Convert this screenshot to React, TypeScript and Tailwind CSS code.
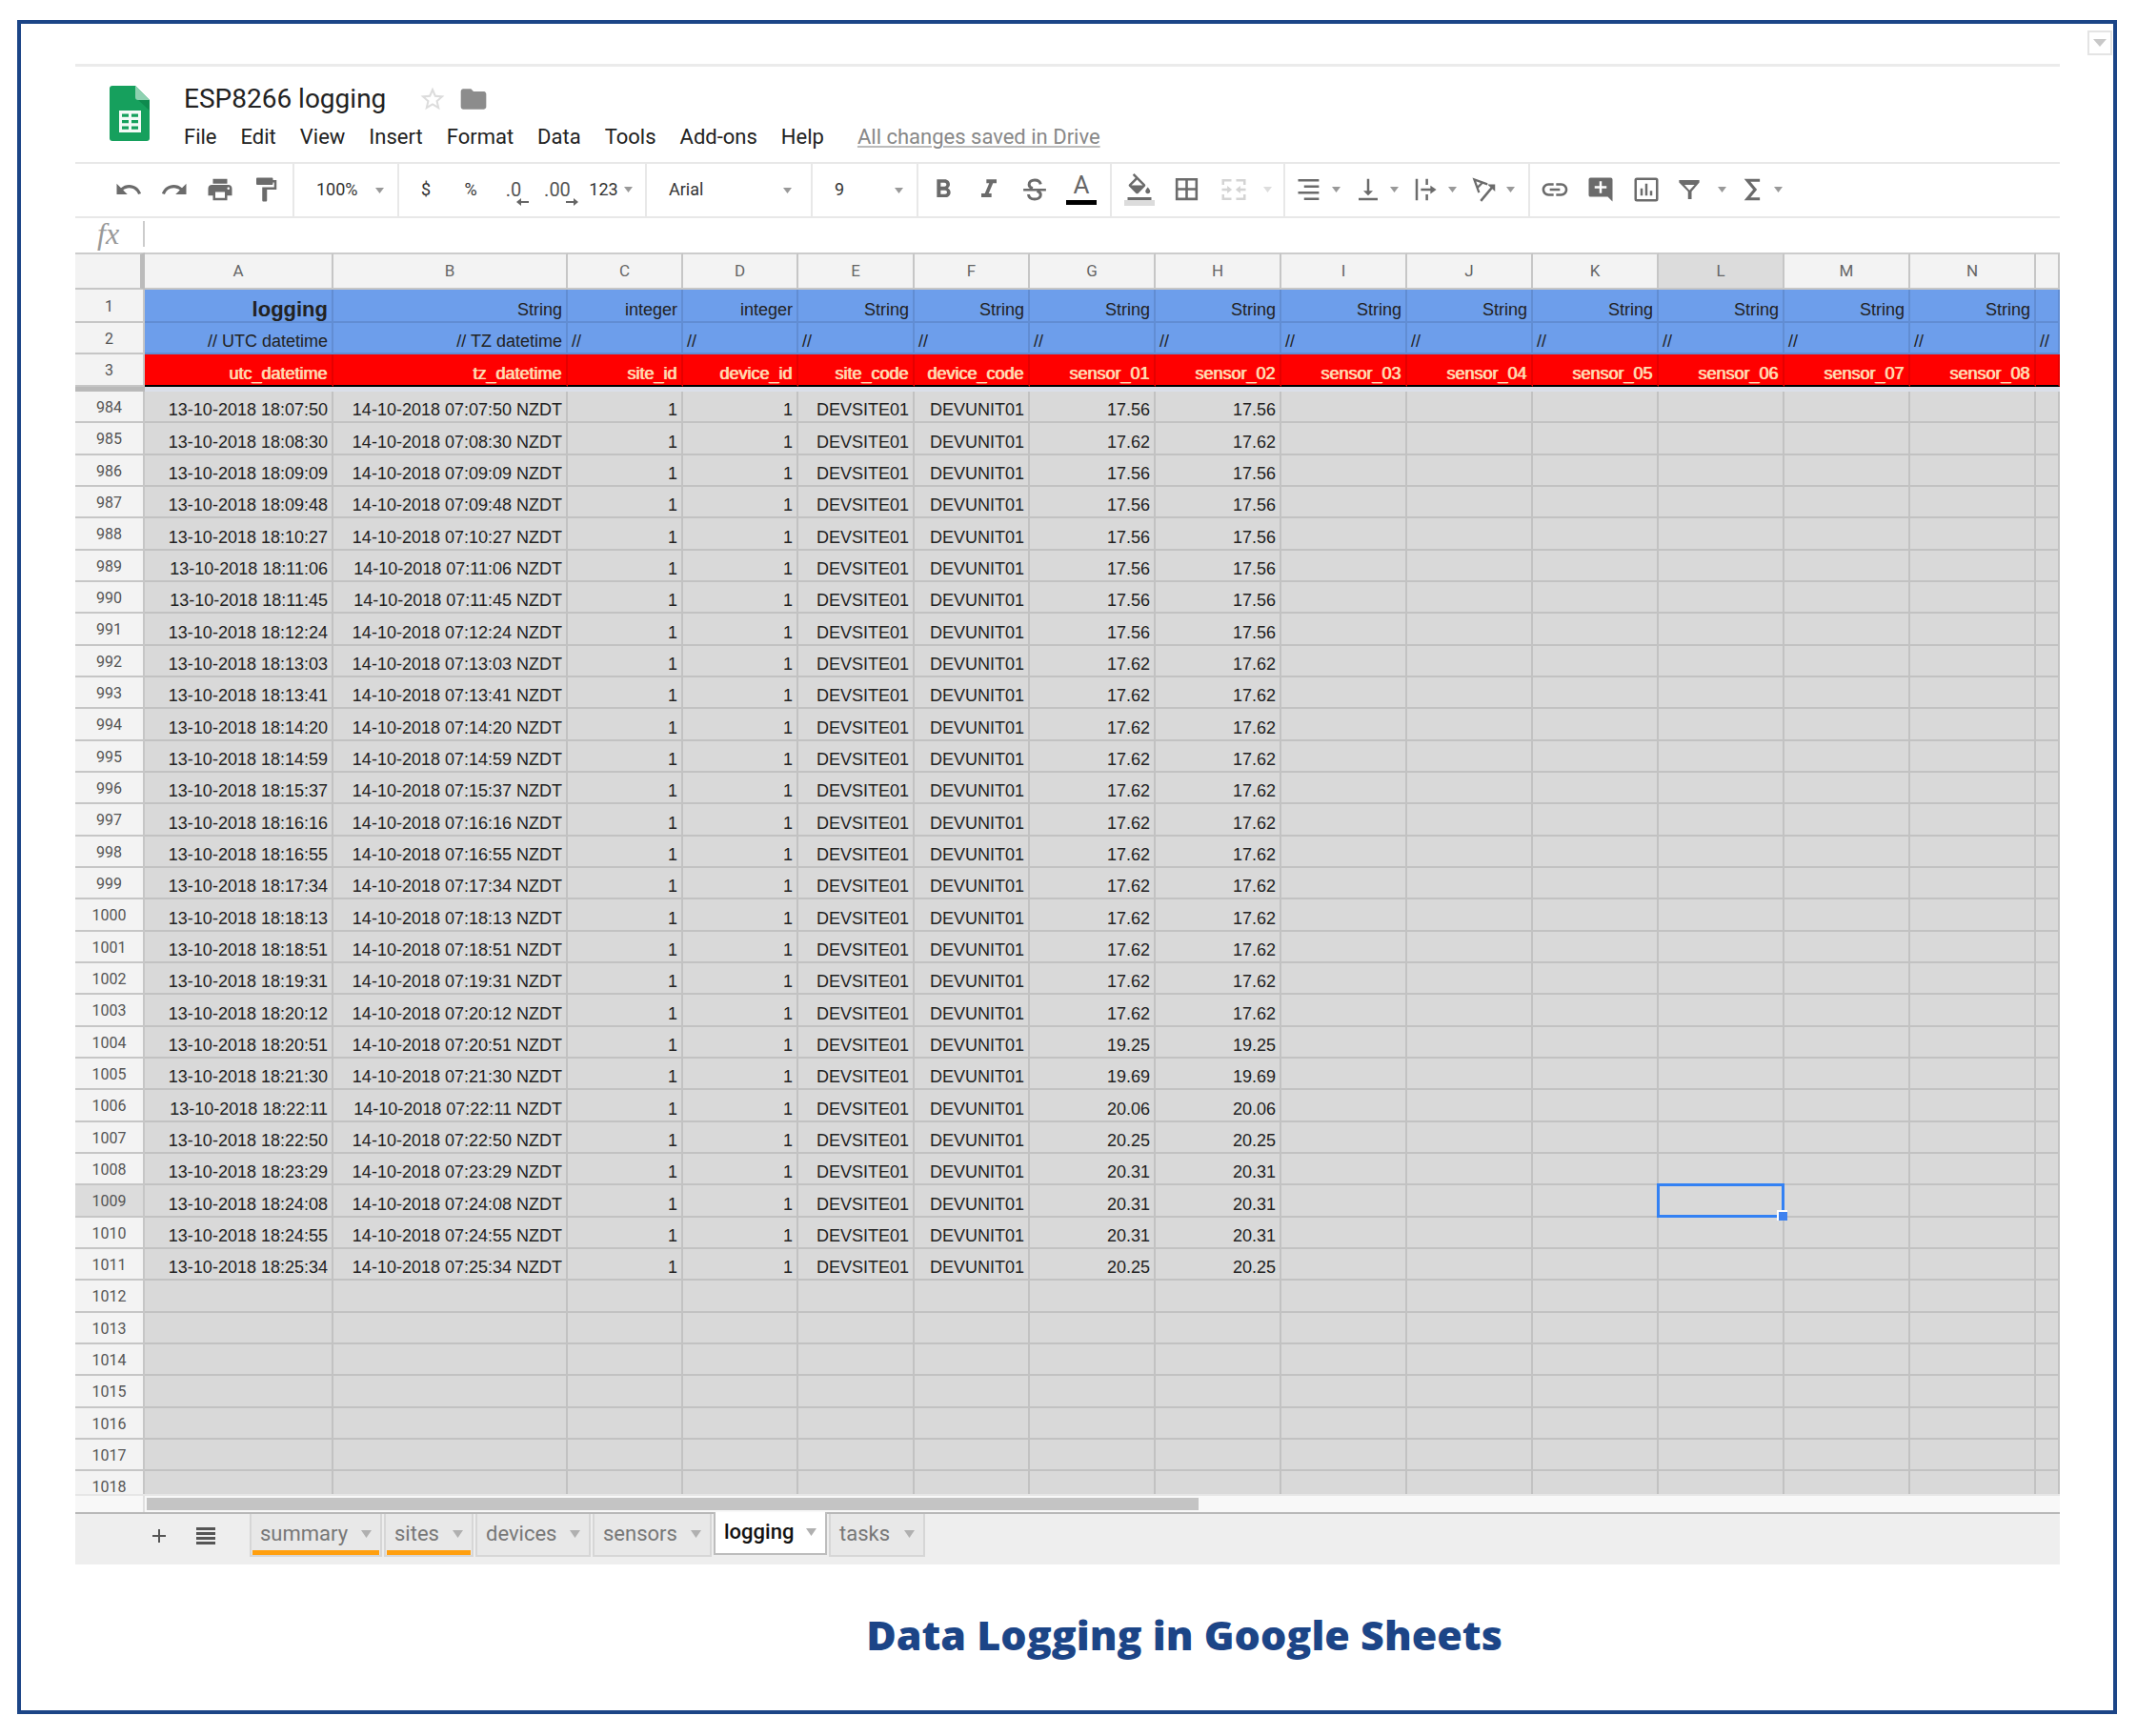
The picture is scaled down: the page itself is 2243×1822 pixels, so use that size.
import React from "react";
import {
  MdUndo, MdRedo, MdPrint, MdFormatPaint, MdFormatBold, MdFormatItalic,
  MdFormatColorFill, MdBorderAll, MdVerticalAlignBottom,
  MdInsertLink, MdFolder, MdStarBorder, MdAdd,
} from "react-icons/md";

const ICON = 30;
const GREY = "#6b6b6b";

function Caret({ className = "text-[#999]" }: { className?: string }) {
  return (
    <svg width="9" height="6" viewBox="0 0 9 6" className={"shrink-0 " + className} aria-hidden="true">
      <path d="M0 0h9L4.5 6z" fill="currentColor" />
    </svg>
  );
}

function SheetsLogo() {
  return (
    <svg width="42" height="58" viewBox="0 0 42 58" aria-label="Sheets">
      <path d="M3 0h24l15 15v40a3 3 0 0 1-3 3H3a3 3 0 0 1-3-3V3a3 3 0 0 1 3-3z" fill="#16a05d" />
      <path d="M29 14l13 12V15z" fill="#0e8a4e" />
      <path d="M27 0l15 15H30a3 3 0 0 1-3-3z" fill="#8ed1b1" />
      <path
        fill="#f4faf7"
        fillRule="evenodd"
        d="M10 26h23v23H10zM13 29.500v3.200h7v-3.200zM23 29.500v3.200h7v-3.200zM13 36v3.200h7V36zM23 36v3.200h7V36zM13 42.500v3.200h7v-3.200zM23 42.500v3.200h7v-3.200z"
      />
    </svg>
  );
}

function Stroke({ children, color = GREY }: { children: React.ReactNode; color?: string }) {
  return (
    <svg width={ICON} height={ICON} viewBox="0 0 24 24" fill="none" stroke={color} strokeWidth="2" className="shrink-0">
      {children}
    </svg>
  );
}

const MergeIcon = () => (
  <Stroke color="#d4d4d4">
    <path d="M3 8V4.200h7M14 4.200h7V8M3 16v3.800h7M14 19.800h7V16" />
    <path d="M2 12h5M22 12h-5" />
    <path d="M6.500 8.800L10.500 12l-4 3.200zM17.500 8.800L13.500 12l4 3.200z" fill="#d4d4d4" stroke="none" />
  </Stroke>
);

const AlignRightIcon = () => (
  <Stroke>
    <path d="M2 4.200h17.500M7 9.400h12.500M2 14.600h17.500M7 19.800h12.500" />
  </Stroke>
);

const OverflowIcon = () => (
  <Stroke>
    <path d="M4 3v18M12.500 3v5M12.500 16v5M7.500 12H17" />
    <path d="M15.500 8.500L20.500 12l-5 3.500z" fill={GREY} stroke="none" />
  </Stroke>
);

const RotateIcon = () => (
  <Stroke>
    <path d="M7.500 14.500L3.500 3.500l11 4M6 10.500l4.500-4.500" strokeWidth="1.800" />
    <path d="M9 21.500L19 9.500" />
    <path d="M14.500 7.500h6.500v6z" fill={GREY} stroke="none" />
  </Stroke>
);

const StrikeIcon = () => (
  <Stroke>
    <path d="M17 7.500C16.500 5 14.500 4 12 4 9.300 4 7.300 5.400 7.300 7.700c0 1.500 1 2.600 3 3.300M14 13c2 .7 3 1.700 3 3.300 0 2.400-2.200 3.700-5 3.700-2.900 0-5-1.300-5.200-4" strokeWidth="2.400" />
    <path d="M2.500 12.200h19" />
  </Stroke>
);

const SigmaIcon = () => (
  <Stroke>
    <path d="M18.500 4.200H8L14.500 12 8 19.800h10.500" strokeWidth="2.500" />
  </Stroke>
);

const CommentIcon = () => (
  <svg width={ICON} height={ICON} viewBox="0 0 24 24" fill={GREY} className="shrink-0">
    <path d="M3.500 2h17A1.500 1.500 0 0 1 22 3.500V22l-4-4H3.500A1.500 1.500 0 0 1 2 16.500v-13A1.500 1.500 0 0 1 3.500 2zM11 5v4H7v2h4v4h2v-4h4V9h-4V5z" fillRule="evenodd" />
  </svg>
);

const ChartIcon = () => (
  <Stroke>
    <rect x="3" y="3" width="18" height="18" rx="1" />
    <path d="M8 11v6M12 7v10M16 13v4" />
  </Stroke>
);

const FilterIcon = () => (
  <svg width={ICON} height={ICON} viewBox="0 0 24 24" fill={GREY} className="shrink-0">
    <path fillRule="evenodd" d="M3.500 4h17v2L14 13.500V20h-3v-6.500L3.500 6zM8 8l4.200 4.600L16.500 8z" />
  </svg>
);

function DecimalIcon({ text, dir }: { text: string; dir: "left" | "right" }) {
  return (
    <span className="relative text-[20px] leading-none text-[#555]">
      {text}
      <svg width="13" height="8" viewBox="0 0 13 8" className="absolute -right-2 top-[19px]">
        <path fill="#666" d={dir === "left" ? "M0 4l5-4v3h8v2H5v3z" : "M13 4L8 0v3H0v2h8v3z"} />
      </svg>
    </span>
  );
}

function Tool({ label, caret, className = "w-12 gap-2", children }: {
  label: string; caret?: boolean; className?: string; children: React.ReactNode;
}) {
  return (
    <button type="button" aria-label={label} className={"flex h-full shrink-0 items-center justify-center pb-[2px] text-[18px] text-[#333] " + className}>
      {children}
      {caret && <Caret />}
    </button>
  );
}

function Picker({ label, options, className, caretClass }: {
  label: string; options: string[]; className: string; caretClass: string;
}) {
  return (
    <label className={"relative flex shrink-0 items-center border-r-2 border-[#e8e8e8] " + className}>
      <select aria-label={label} className="h-full w-full appearance-none bg-transparent pb-[2px] pl-[23px] text-[18px] text-[#333] outline-none">
        {options.map((o) => <option key={o}>{o}</option>)}
      </select>
      <Caret className={"pointer-events-none absolute text-[#999] " + caretClass} />
    </label>
  );
}

function Group({ className = "", children }: { className?: string; children: React.ReactNode }) {
  return <div className={"flex shrink-0 items-center border-r-2 border-[#e8e8e8] " + className}>{children}</div>;
}

function Toolbar() {
  return (
    <div className="flex h-[59px] border-y-2 border-[#e8e8e8]">
      <Group className="w-[230px] pl-8">
        <Tool label="Undo"><MdUndo size={ICON} color={GREY} /></Tool>
        <Tool label="Redo"><MdRedo size={ICON} color={GREY} /></Tool>
        <Tool label="Print"><MdPrint size={ICON} color={GREY} /></Tool>
        <Tool label="Paint format"><MdFormatPaint size={ICON} color={GREY} /></Tool>
      </Group>
      <Picker label="Zoom" options={["100%", "50%", "75%", "150%"]} className="w-[110px]" caretClass="right-[14px]" />
      <Group className="w-[260px] pl-1">
        <Tool label="Currency">$</Tool>
        <Tool label="Percent" className="w-[46px]">%</Tool>
        <Tool label="Decrease decimal places" className="w-11"><DecimalIcon text=".0" dir="left" /></Tool>
        <Tool label="Increase decimal places"><DecimalIcon text=".00" dir="right" /></Tool>
        <Tool label="More formats" caret className="w-16 gap-[6px]">123</Tool>
      </Group>
      <Picker label="Font" options={["Arial", "Georgia", "Verdana"]} className="w-[174px]" caretClass="right-5" />
      <Picker label="Font size" options={["9", "10", "11", "12"]} className="w-[111px]" caretClass="right-[14px]" />
      <Group className="w-[203px] pl-[2px]">
        <Tool label="Bold"><MdFormatBold size={ICON + 2} color={GREY} /></Tool>
        <Tool label="Italic"><MdFormatItalic size={ICON + 2} color={GREY} /></Tool>
        <Tool label="Strikethrough"><StrikeIcon /></Tool>
        <Tool label="Text color" className="w-[50px]">
          <span className="flex w-8 flex-col items-center border-b-[5px] border-black pb-1 text-[26px] leading-6 text-[#666]">A</span>
        </Tool>
      </Group>
      <Group className="w-[182px] pl-1">
        <Tool label="Fill color" className="w-[50px]">
          <span className="flex h-[34px] w-8 justify-center overflow-hidden border-b-[6px] border-[#dcdcdc]">
            <MdFormatColorFill size={30} color={GREY} className="shrink-0" />
          </span>
        </Tool>
        <Tool label="Borders"><MdBorderAll size={ICON + 1} color={GREY} /></Tool>
        <Tool label="Merge cells" className="w-[76px] gap-4">
          <MergeIcon />
          <Caret className="text-[#ddd]" />
        </Tool>
      </Group>
      <Group className="w-[257px] pl-1">
        <Tool label="Horizontal align" caret className="w-[61px] gap-2"><AlignRightIcon /></Tool>
        <Tool label="Vertical align" caret className="w-[61px] gap-2"><MdVerticalAlignBottom size={ICON} color={GREY} /></Tool>
        <Tool label="Text wrapping" caret className="w-[61px] gap-2"><OverflowIcon /></Tool>
        <Tool label="Text rotation" caret className="w-[61px] gap-2"><RotateIcon /></Tool>
      </Group>
      <div className="flex items-center pl-[2px]">
        <Tool label="Insert link"><MdInsertLink size={32} color={GREY} /></Tool>
        <Tool label="Insert comment"><CommentIcon /></Tool>
        <Tool label="Insert chart"><ChartIcon /></Tool>
        <Tool label="Filter" caret className="w-[66px] gap-[15px]"><FilterIcon /></Tool>
        <Tool label="Functions" caret className="w-[58px] gap-2"><SigmaIcon /></Tool>
      </div>
    </div>
  );
}

const COLUMNS = ["A", "B", "C", "D", "E", "F", "G", "H", "I", "J", "K", "L", "M", "N", ""];
const COL_WIDTHS = [
  "w-[73px]", "w-[198px]", "w-[246px]", "w-[121px]", "w-[121px]", "w-[122px]", "w-[121px]", "w-[132px]",
  "w-[132px]", "w-[132px]", "w-[132px]", "w-[132px]", "w-[132px]", "w-[132px]", "w-[132px]", "",
];

const TYPES = ["logging", "String", "integer", "integer", "String", "String", "String", "String", "String", "String", "String", "String", "String", "String", ""];
const NOTES = ["// UTC datetime", "// TZ datetime", "//", "//", "//", "//", "//", "//", "//", "//", "//", "//", "//", "//", "//"];
const FIELDS = [
  "utc_datetime", "tz_datetime", "site_id", "device_id", "site_code", "device_code", "sensor_01", "sensor_02",
  "sensor_03", "sensor_04", "sensor_05", "sensor_06", "sensor_07", "sensor_08", "",
];

const READINGS: [string, string][] = [
  ["07:50", "17.56"], ["08:30", "17.62"], ["09:09", "17.56"], ["09:48", "17.56"], ["10:27", "17.56"],
  ["11:06", "17.56"], ["11:45", "17.56"], ["12:24", "17.56"], ["13:03", "17.62"], ["13:41", "17.62"],
  ["14:20", "17.62"], ["14:59", "17.62"], ["15:37", "17.62"], ["16:16", "17.62"], ["16:55", "17.62"],
  ["17:34", "17.62"], ["18:13", "17.62"], ["18:51", "17.62"], ["19:31", "17.62"], ["20:12", "17.62"],
  ["20:51", "19.25"], ["21:30", "19.69"], ["22:11", "20.06"], ["22:50", "20.25"], ["23:29", "20.31"],
  ["24:08", "20.31"], ["24:55", "20.31"], ["25:34", "20.25"],
];

const FIRST_ROW = 984;
const ROW_COUNT = 35;
const ACTIVE_ROW = 1009;
const ACTIVE_COL = 11;

function rowCells(i: number): string[] {
  const r = READINGS[i];
  if (!r) return COLUMNS.map(() => "");
  const [t, v] = r;
  const filled = [`13-10-2018 18:${t}`, `14-10-2018 07:${t} NZDT`, "1", "1", "DEVSITE01", "DEVUNIT01", v, v];
  return COLUMNS.map((_, c) => filled[c] ?? "");
}

function RowHead({ n, active }: { n: number; active?: boolean }) {
  return (
    <th scope="row" className={"border-b-2 border-r-2 border-[#c6c6c6] p-0 pt-[2px] text-center align-middle font-['Roboto',sans-serif] text-[16px] font-normal leading-5 text-[#555] " + (active ? "bg-[#dcdcdc]" : "bg-[#f3f3f3]")}>
      {n}
    </th>
  );
}

const CELL = "overflow-hidden whitespace-nowrap border-b-2 border-r-2 py-0 pl-1 pr-1 align-bottom leading-6 ";

function Sheet() {
  return (
    <table className="w-full table-fixed border-separate border-spacing-0 text-[18px] text-[#222] font-['Liberation_Sans',Arial,sans-serif]">
      <colgroup>
        {COL_WIDTHS.map((w, i) => <col key={i} className={w} />)}
      </colgroup>
      <thead>
        <tr className="h-[39px] font-['Roboto',sans-serif] text-[17px] text-[#666]">
          <td className="border-y-2 border-r-[5px] border-b-[#c6c6c6] border-r-[#bbb] border-t-[#ccc] bg-[#f3f3f3] p-0" />
          {COLUMNS.map((c, i) => (
            <th key={i} scope="col" className={"border-y-2 border-r-2 border-b-[#c6c6c6] border-r-[#c6c6c6] border-t-[#ccc] p-0 text-center font-normal " + (i === ACTIVE_COL ? "bg-[#dcdcdc]" : "bg-[#f3f3f3]")}>
              {c}
            </th>
          ))}
        </tr>
        <tr className="h-[35px] bg-[#6d9eeb]">
          <RowHead n={1} />
          {TYPES.map((t, i) => (
            <td key={i} className={CELL + "border-black/10 text-right " + (i === 0 ? "text-[22px] font-bold" : "")}>{t}</td>
          ))}
        </tr>
        <tr className="h-[33px] bg-[#6d9eeb]">
          <RowHead n={2} />
          {NOTES.map((t, i) => (
            <td key={i} className={CELL + "border-black/10 " + (i < 2 ? "text-right" : "text-left")}>{t}</td>
          ))}
        </tr>
        <tr className="h-[34px] bg-[#ff0000] text-[#ffdcb4]">
          <RowHead n={3} />
          {FIELDS.map((t, i) => (
            <td key={i} className={CELL + "border-b-black border-r-black/10 text-right [text-shadow:-1px_0_0_#ffcfa0]"}>{t}</td>
          ))}
        </tr>
        <tr className="h-[5px]">
          <td className="bg-[#b9b9b9] p-0" />
          <td colSpan={15} className="bg-[#dbdfe9] p-0" />
        </tr>
      </thead>
      <tbody className="bg-[#d9d9d9]">
        {Array.from({ length: ROW_COUNT }, (_, i) => {
          const n = FIRST_ROW + i;
          return (
            <tr key={n} className={i % 3 === 1 ? "h-[34px]" : "h-[33px]"}>
              <RowHead n={n} active={n === ACTIVE_ROW} />
              {rowCells(i).map((v, c) =>
                n === ACTIVE_ROW && c === ACTIVE_COL ? (
                  <td key={c} className="relative border-b-2 border-r-2 border-black/10 p-0">
                    <div className="absolute -bottom-[2px] -left-[2px] -right-[2px] -top-[2px] border-[3px] border-[#3381f3]" />
                    <div className="absolute -bottom-[5px] -right-[5px] size-[11px] border-l-2 border-t-2 border-white bg-[#3f82ef]" />
                  </td>
                ) : (
                  <td key={c} className={CELL + "border-black/10 text-right"}>{v}</td>
                ),
              )}
            </tr>
          );
        })}
      </tbody>
    </table>
  );
}

function Tab({ name, width, marked, active }: { name: string; width: string; marked?: boolean; active?: boolean }) {
  return (
    <button
      type="button"
      role="tab"
      aria-selected={!!active}
      className={
        "flex items-stretch border-2 border-t-0 px-[1px] text-[22px] leading-7 " + width +
        (active ? " -mt-[2px] h-[45px] border-[#bdbdbd] bg-white font-medium text-[#111]" : " h-[45px] border-[#d6d6d6] bg-[#e8e8e8] text-[#777]")
      }
    >
      <span className={"flex w-full items-center justify-between border-b-[5px] pl-2 pr-2 pt-[3px] " + (marked ? "border-[#ff9f0f]" : "border-transparent")}>
        {name}
        <svg width="11" height="8" viewBox="0 0 11 8" aria-hidden="true"><path d="M0 0h11L5.500 8z" fill="#b0b0b0" /></svg>
      </span>
    </button>
  );
}

const MENUS = ["File", "Edit", "View", "Insert", "Format", "Data", "Tools", "Add-ons", "Help"];

export default function App() {
  return (
    <div className="bg-white pb-[23px] pl-[18px] pr-[21px] pt-[21px] font-['Roboto',sans-serif]">
      <main className="relative border-4 border-[#1c4587] pb-[51px] pl-[57px] pr-14 pt-[42px]">
        <button type="button" aria-label="Options" className="absolute right-[1px] top-[7px] flex size-[26px] items-center justify-center border-2 border-[#e4e4e4] bg-white">
          <svg width="14" height="8" viewBox="0 0 14 8"><path d="M0 0h14L7 8z" fill="#c8c8c8" /></svg>
        </button>

        <div className="overflow-hidden">
          <header className="flex h-[103px] border-t-[3px] border-[#ebebeb] pl-9 pt-5">
            <SheetsLogo />
            <div className="flex flex-col pl-9">
              <div className="-mt-[2px] flex h-8 items-center">
                <h1 className="w-[246px] text-[28px] leading-8 text-[#222]">ESP8266 logging</h1>
                <button type="button" aria-label="Star"><MdStarBorder size={30} color="#dcdcdc" /></button>
                <button type="button" aria-label="Move to folder" className="ml-3"><MdFolder size={32} color="#8c8c8c" /></button>
              </div>
              <nav className="flex items-center gap-[25px] pt-2 text-[22px] leading-8 text-[#222]">
                {MENUS.map((m) => <button key={m} type="button">{m}</button>)}
                <a href="#" className="ml-[10px] text-[#888] underline decoration-[#bbb] decoration-2 underline-offset-2">All changes saved in Drive</a>
              </nav>
            </div>
          </header>

          <Toolbar />

          <div className="flex h-9 items-center pb-1">
            <label htmlFor="formula" className="w-[71px] pl-[23px] font-['Liberation_Serif',serif] text-[32px] italic leading-8 text-[#999]">fx</label>
            <input id="formula" type="text" className="h-[27px] flex-1 border-l-2 border-[#ccc] px-2 text-[18px] outline-none" />
          </div>

          <Sheet />

          <div className="relative -mt-[10px] flex h-[19px] border-t-2 border-[#e6e6e6] bg-[#f8f8f8]">
            <div className="w-[73px] shrink-0 border-r-2 border-[#e0e0e0]" />
            <div className="my-[2px] ml-[2px] w-[53%] bg-[#c4c4c4]" />
          </div>

          <div className="relative flex h-[55px] border-t-2 border-[#b8b8b8] bg-[#eee]" role="tablist">
            <button type="button" aria-label="Add sheet" className="ml-[76px] flex w-6 items-center pb-[7px]"><MdAdd size={26} color="#555" /></button>
            <button type="button" aria-label="All sheets" className="ml-[27px] mr-9 flex w-5 items-center pb-[7px]">
              <svg width="20" height="18" viewBox="0 0 20 18"><path d="M0 1.500h20M0 6.500h20M0 11.500h20M0 16.500h20" stroke="#555" strokeWidth="3" /></svg>
            </button>
            <div className="flex gap-[2px]">
              <Tab name="summary" width="w-[139px]" marked />
              <Tab name="sites" width="w-[94px]" marked />
              <Tab name="devices" width="w-[121px]" />
              <Tab name="sensors" width="w-[125px]" />
              <Tab name="logging" width="w-[119px]" active />
              <Tab name="tasks" width="w-[101px]" />
            </div>
          </div>
        </div>

        <h2 className="pl-[245px] pt-[46px] text-center font-['Open_Sans',sans-serif] text-[43px] font-extrabold leading-[56px] text-[#1c4587]">
          Data Logging in Google Sheets
        </h2>
      </main>
    </div>
  );
}
